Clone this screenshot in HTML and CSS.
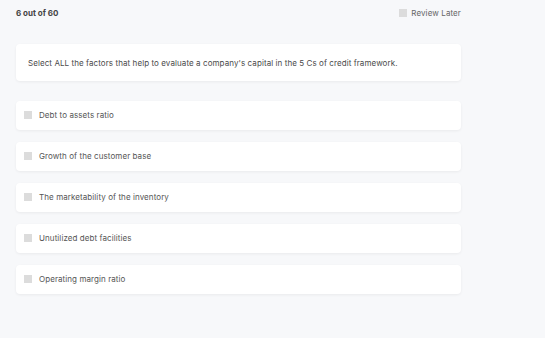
FILE: index.html
```html
<!DOCTYPE html>
<html>
<head>
<meta charset="utf-8">
<link rel="stylesheet" href="styles.css">
</head>
<body>
<div class="page">
  <div class="topbar">
    <div class="count">6 out of 60</div>
    <label class="review"><span class="box"></span><span>Review Later</span></label>
  </div>
  <div class="card question">Select ALL the factors that help to evaluate a company's capital in the 5 Cs of credit framework.</div>
  <div class="options">
    <div class="card option"><span class="box"></span><span>Debt to assets ratio</span></div>
    <div class="card option"><span class="box"></span><span>Growth of the customer base</span></div>
    <div class="card option"><span class="box"></span><span>The marketability of the inventory</span></div>
    <div class="card option"><span class="box"></span><span>Unutilized debt facilities</span></div>
    <div class="card option"><span class="box"></span><span>Operating margin ratio</span></div>
  </div>
</div>
</body>
</html>
```
FILE: styles.css
```css
html, body {
  margin: 0;
  padding: 0;
  background: #f7f8fa;
  height: 100%;
}
body {
  font-family: Inter, "Noto Sans", sans-serif;
  font-size: 8px;
  letter-spacing: 0.08px;
  color: #555;
}
.page {
  width: 445px;
  padding: 8px 0 0 16px;
}
.topbar {
  display: flex;
  justify-content: space-between;
  align-items: center;
  height: 10px;
}
.count {
  font-weight: 700;
  color: #444;
  letter-spacing: 0;
}
.review {
  display: flex;
  align-items: center;
  gap: 4px;
  color: #666;
  letter-spacing: 0.1px;
}
.box {
  display: inline-block;
  width: 8px;
  height: 8px;
  background: #dcdcdc;
  flex: none;
}
.card {
  background: #fff;
  border-radius: 4px;
  box-shadow: 0 1px 3px rgba(0, 0, 0, 0.06);
}
.question {
  margin-top: 26px;
  height: 37px;
  box-sizing: border-box;
  padding: 0 12px;
  display: flex;
  align-items: center;
  color: #4a4a4a;
}
.options {
  margin-top: 20px;
  display: flex;
  flex-direction: column;
  gap: 12px;
}
.option {
  height: 29px;
  box-sizing: border-box;
  padding: 0 0 1px 8px;
  display: flex;
  align-items: center;
  gap: 7px;
}
```
